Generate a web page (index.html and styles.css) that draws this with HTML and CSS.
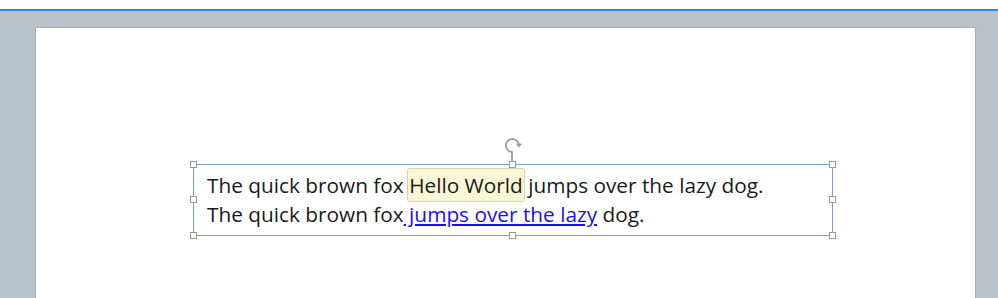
FILE: index.html
```html
<!DOCTYPE html>
<html lang="en">
<head>
    <meta charset="UTF-8">
    <title>Text box editor</title>
    <link rel="stylesheet" href="styles.css">
</head>
<body>
    <div class="topbar"></div>
    <div class="workspace">
        <div class="page">
            <div class="textbox">
                <svg class="rotate" width="22" height="28" viewBox="0 0 22 28">
                    <path d="M9 27 V15 A6.5 6.5 0 1 1 15.8 7.5" fill="none" stroke="#9c9c9c" stroke-width="1.8"/>
                    <path d="M12.8 6.8 L19.2 6.8 L16 10.6 Z" fill="#9c9c9c"/>
                </svg>
                <span class="handle h-tl"></span>
                <span class="handle h-tm"></span>
                <span class="handle h-tr"></span>
                <span class="handle h-ml"></span>
                <span class="handle h-mr"></span>
                <span class="handle h-bl"></span>
                <span class="handle h-bm"></span>
                <span class="handle h-br"></span>
                <p>The quick brown fox <span class="field">Hello World</span> jumps over the lazy dog.</p>
                <p>The quick brown fox<a href="#"> jumps over the lazy</a> dog.</p>
            </div>
        </div>
    </div>
</body>
</html>
```

FILE: styles.css
```css
* {
    margin: 0;
    padding: 0;
    box-sizing: border-box;
}
body {
    font-family: "Open Sans", "Noto Sans", sans-serif;
    background: #fff;
    height: 298px;
    overflow: hidden;
}
.topbar {
    height: 11px;
    background: #fff;
    border-bottom: 2px solid #2a8ae0;
}
.workspace {
    background: #b9c2c9;
    height: 287px;
    padding: 17px 23px 0 36px;
}
.page {
    background: #fff;
    height: 100%;
    box-shadow: -1px 0 1px #a3acb3, 1px 0 1px #a3acb3, 0 -1px 1px #a9b2b9;
    padding-top: 136px;
    padding-left: 157px;
}
.textbox {
    position: relative;
    width: 640px;
    height: 72px;
    border: 1px solid #7e9ebf;
    padding: 6px 0 0 13px;
    font-size: 20.8px;
    line-height: 29px;
    color: #1a1a1a;
}
.textbox p {
    white-space: nowrap;
}
.field {
    background: #f8f6d4;
    border: 1px solid #d9d6a6;
    border-radius: 3px;
    padding: 2px 1px;
    margin: 0 -2px;
}
.textbox a {
    color: #1a10f0;
}
.handle {
    position: absolute;
    width: 7px;
    height: 7px;
    background: #fff;
    border: 1px solid #9a9a9a;
}
.h-tl { left: -4px; top: -4px; }
.h-tm { left: 315px; top: -4px; }
.h-tr { right: -4px; top: -4px; }
.h-ml { left: -4px; top: 31px; }
.h-mr { right: -4px; top: 31px; }
.h-bl { left: -4px; bottom: -4px; }
.h-bm { left: 315px; bottom: -4px; }
.h-br { right: -4px; bottom: -4px; }
.rotate {
    position: absolute;
    left: 309px;
    top: -28px;
}
```
